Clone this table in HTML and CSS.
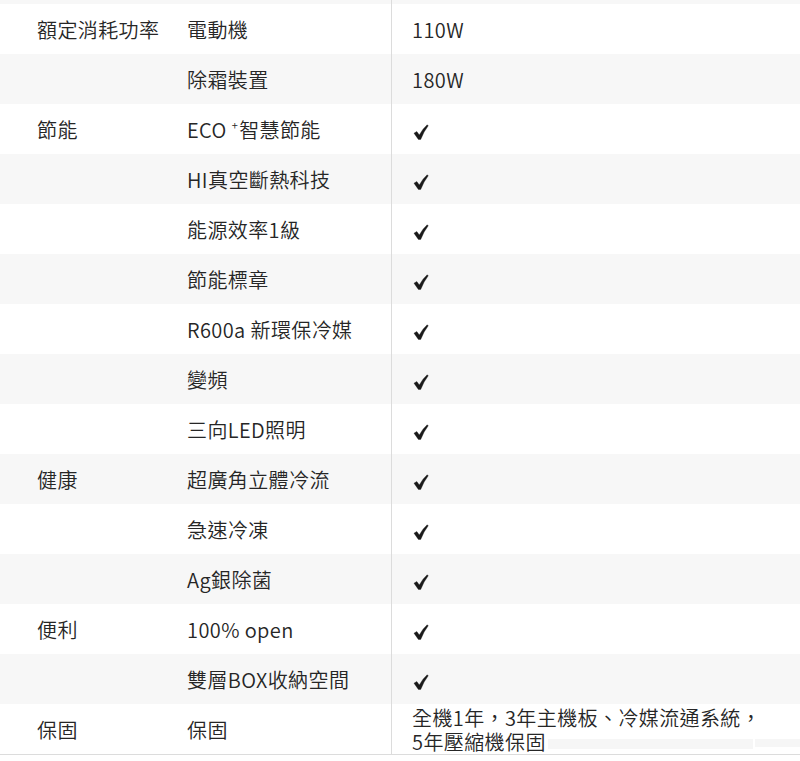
FILE: index.html
```html
<!DOCTYPE html>
<html lang="zh-Hant">
<head>
<meta charset="utf-8">
<title>規格</title>
<link rel="stylesheet" href="styles.css">
</head>
<body>
<div class="spec">
  <div class="row gray top"><div class="c1"></div><div class="c2"></div><div class="c3"></div></div>
  <div class="row"><div class="c1">額定消耗功率</div><div class="c2">電動機</div><div class="c3">110W</div></div>
  <div class="row gray"><div class="c1"></div><div class="c2">除霜裝置</div><div class="c3">180W</div></div>
  <div class="row"><div class="c1">節能</div><div class="c2">ECO<span class="plus">+</span>智慧節能</div><div class="c3"><svg class="chk" viewBox="0 0 16 16"><path d="M1 9.2 L3.8 7.6 L6.3 11 Q9.6 4.8 14.2 0.8 L15.2 1.8 Q10.9 7.2 7.7 15.4 L5.4 15.4 Z"/></svg></div></div>
  <div class="row gray"><div class="c1"></div><div class="c2">HI真空斷熱科技</div><div class="c3"><svg class="chk" viewBox="0 0 16 16"><path d="M1 9.2 L3.8 7.6 L6.3 11 Q9.6 4.8 14.2 0.8 L15.2 1.8 Q10.9 7.2 7.7 15.4 L5.4 15.4 Z"/></svg></div></div>
  <div class="row"><div class="c1"></div><div class="c2">能源效率1級</div><div class="c3"><svg class="chk" viewBox="0 0 16 16"><path d="M1 9.2 L3.8 7.6 L6.3 11 Q9.6 4.8 14.2 0.8 L15.2 1.8 Q10.9 7.2 7.7 15.4 L5.4 15.4 Z"/></svg></div></div>
  <div class="row gray"><div class="c1"></div><div class="c2">節能標章</div><div class="c3"><svg class="chk" viewBox="0 0 16 16"><path d="M1 9.2 L3.8 7.6 L6.3 11 Q9.6 4.8 14.2 0.8 L15.2 1.8 Q10.9 7.2 7.7 15.4 L5.4 15.4 Z"/></svg></div></div>
  <div class="row"><div class="c1"></div><div class="c2">R600a 新環保冷媒</div><div class="c3"><svg class="chk" viewBox="0 0 16 16"><path d="M1 9.2 L3.8 7.6 L6.3 11 Q9.6 4.8 14.2 0.8 L15.2 1.8 Q10.9 7.2 7.7 15.4 L5.4 15.4 Z"/></svg></div></div>
  <div class="row gray"><div class="c1"></div><div class="c2">變頻</div><div class="c3"><svg class="chk" viewBox="0 0 16 16"><path d="M1 9.2 L3.8 7.6 L6.3 11 Q9.6 4.8 14.2 0.8 L15.2 1.8 Q10.9 7.2 7.7 15.4 L5.4 15.4 Z"/></svg></div></div>
  <div class="row"><div class="c1"></div><div class="c2">三向LED照明</div><div class="c3"><svg class="chk" viewBox="0 0 16 16"><path d="M1 9.2 L3.8 7.6 L6.3 11 Q9.6 4.8 14.2 0.8 L15.2 1.8 Q10.9 7.2 7.7 15.4 L5.4 15.4 Z"/></svg></div></div>
  <div class="row gray"><div class="c1">健康</div><div class="c2">超廣角立體冷流</div><div class="c3"><svg class="chk" viewBox="0 0 16 16"><path d="M1 9.2 L3.8 7.6 L6.3 11 Q9.6 4.8 14.2 0.8 L15.2 1.8 Q10.9 7.2 7.7 15.4 L5.4 15.4 Z"/></svg></div></div>
  <div class="row"><div class="c1"></div><div class="c2">急速冷凍</div><div class="c3"><svg class="chk" viewBox="0 0 16 16"><path d="M1 9.2 L3.8 7.6 L6.3 11 Q9.6 4.8 14.2 0.8 L15.2 1.8 Q10.9 7.2 7.7 15.4 L5.4 15.4 Z"/></svg></div></div>
  <div class="row gray"><div class="c1"></div><div class="c2">Ag銀除菌</div><div class="c3"><svg class="chk" viewBox="0 0 16 16"><path d="M1 9.2 L3.8 7.6 L6.3 11 Q9.6 4.8 14.2 0.8 L15.2 1.8 Q10.9 7.2 7.7 15.4 L5.4 15.4 Z"/></svg></div></div>
  <div class="row"><div class="c1">便利</div><div class="c2">100% open</div><div class="c3"><svg class="chk" viewBox="0 0 16 16"><path d="M1 9.2 L3.8 7.6 L6.3 11 Q9.6 4.8 14.2 0.8 L15.2 1.8 Q10.9 7.2 7.7 15.4 L5.4 15.4 Z"/></svg></div></div>
  <div class="row gray"><div class="c1"></div><div class="c2">雙層BOX收納空間</div><div class="c3"><svg class="chk" viewBox="0 0 16 16"><path d="M1 9.2 L3.8 7.6 L6.3 11 Q9.6 4.8 14.2 0.8 L15.2 1.8 Q10.9 7.2 7.7 15.4 L5.4 15.4 Z"/></svg></div></div>
  <div class="row last"><div class="c1">保固</div><div class="c2">保固</div><div class="c3 multi"><span class="line">全機1年，3年主機板、冷媒流通系統，</span><span class="line">5年壓縮機保固<span class="ghost g1"></span><span class="ghost g2"></span></span></div></div>
</div>
</body>
</html>
```

FILE: styles.css
```css
html, body {
  margin: 0;
  padding: 0;
  background: #ffffff;
}

body {
  font-family: "Noto Sans CJK TC", "Noto Sans", sans-serif;
  font-size: 20px;
  font-weight: 350;
  color: #262626;
  letter-spacing: 0.4px;
}

.spec {
  width: 800px;
  border-bottom: 1px solid #dcdcdc;
}

.row {
  display: grid;
  grid-template-columns: 150px 241px 1fr;
  height: 50px;
  background: #ffffff;
}

.row.gray {
  background: #f7f7f7;
}

.row.top {
  height: 4px;
}

.c1, .c2, .c3 {
  line-height: 51px;
  white-space: nowrap;
}

.c1, .c2 {
  padding-left: 37px;
}

.c3 {
  border-left: 1px solid #dcdcdc;
  padding-left: 20px;
}

.plus {
  display: inline-block;
  font-size: 11px;
  line-height: 11px;
  vertical-align: 8px;
  margin: 0 1px 0 5px;
}

.chk {
  width: 16px;
  height: 16px;
  fill: #1a1a1a;
  stroke: #1a1a1a;
  stroke-width: 0.4;
  vertical-align: -2px;
  margin-left: 1px;
}

.c3.multi {
  display: flex;
  flex-direction: column;
  align-items: flex-start;
  justify-content: center;
  padding-top: 1px;
}

.line {
  display: block;
  line-height: 24px;
}

.ghost {
  display: inline-block;
  height: 10px;
  background: #f6f6f6;
  vertical-align: 1px;
}

.g1 {
  width: 205px;
  margin-left: 2px;
}

.g2 {
  width: 46px;
  height: 8px;
  margin-left: 2px;
  vertical-align: 3px;
}
```
